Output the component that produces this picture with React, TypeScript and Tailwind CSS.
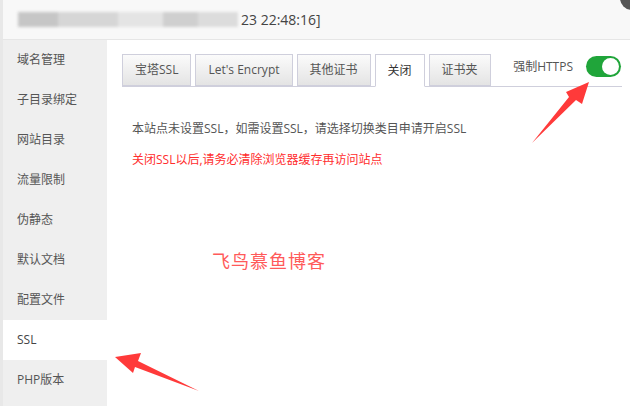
import React from "react";

const menu = ["域名管理", "子目录绑定", "网站目录", "流量限制", "伪静态", "默认文档", "配置文件", "SSL", "PHP版本"];
const tabs = ["宝塔SSL", "Let's Encrypt", "其他证书", "关闭", "证书夹"];

export default function App() {
  return (
    <div
      className="relative w-[630px] h-[406px] overflow-hidden bg-white text-[12px] text-[#555]"
      style={{ fontFamily: '"Open Sans", "Noto Sans CJK SC", sans-serif' }}
    >
      {/* title bar */}
      <div className="h-[40px] flex items-center pl-[15px] bg-[#f8f8f8] border-b border-l-[3px] border-b-[#e6e6e6] border-l-[#e8e8e8]">
        <div className="flex items-center h-[15px] blur-[1.5px]">
          <span className="w-[40px] h-full bg-[#c6c6c6]" />
          <span className="w-[60px] h-full bg-[#d6d6d6]" />
          <span className="w-[45px] h-full bg-[#e4e4e4]" />
          <span className="w-[35px] h-full bg-[#cfcfcf]" />
          <span className="w-[40px] h-full bg-[#dcdcdc]" />
        </div>
        <span className="ml-[3px] text-[14px] text-[#444]">23 22:48:16]</span>
      </div>
      <div className="absolute right-[-14px] top-[-14px] w-[24px] h-[24px] rounded-full bg-[#555]" />

      <div className="flex h-[366px] border-l-[3px] border-l-[#e8e8e8]">
        {/* sidebar */}
        <div className="w-[104px] bg-[#efefef] flex flex-col">
          {menu.map((m) => (
            <div
              key={m}
              className={`h-[40px] shrink-0 flex items-center pl-[14px] ${m === "SSL" ? "bg-white text-[#444]" : ""}`}
            >
              {m}
            </div>
          ))}
        </div>

        {/* content */}
        <div className="flex-1 pl-[15px] pr-[8px] pt-[15px]">
          <div className="flex items-end border-b border-[#cfcfdc] h-[32px]">
            {tabs.map((t) => (
              <div
                key={t}
                className={`h-[32px] mr-[4px] px-[12px] flex items-center border border-[#cfcfdc] ${
                  t === "关闭"
                    ? "bg-white border-b-white -mb-px h-[33px] text-[#333]"
                    : "bg-gradient-to-b from-[#fbfbfb] to-[#e4e4e4] text-[#555]"
                }`}
              >
                {t}
              </div>
            ))}
            <div className="ml-auto flex items-center h-full pb-[8px] pr-[1px]">
              <span className="text-[#555] mr-[13px]">强制HTTPS</span>
              <div className="w-[35px] h-[21px] rounded-full bg-[#20a53a] relative">
                <div className="absolute right-[2px] top-[2px] w-[17px] h-[17px] rounded-full bg-white" />
              </div>
            </div>
          </div>
          <div className="pl-[10px] pt-[33px] text-[#555]">本站点未设置SSL，如需设置SSL，请选择切换类目申请开启SSL</div>
          <div className="pl-[10px] pt-[13px] text-[#ff2d2d]">关闭SSL以后,请务必清除浏览器缓存再访问站点</div>
          <div
            className="pl-[90px] pt-[78px] text-[18px] text-[#ff5a5a] tracking-[1px]"
            style={{ fontFamily: '"Noto Sans CJK SC", sans-serif' }}
          >
            飞鸟慕鱼博客
          </div>
        </div>
      </div>

      {/* annotation arrows */}
      <svg className="absolute inset-0 pointer-events-none" width="630" height="406">
        <polygon points="532,143 569,97 566,92 589,82 582,104 576,100" fill="#ff3a3a" />
        <polygon points="115,357 141,353 138,361 199,391 135,367 133,373" fill="#ff3a3a" />
      </svg>
    </div>
  );
}
